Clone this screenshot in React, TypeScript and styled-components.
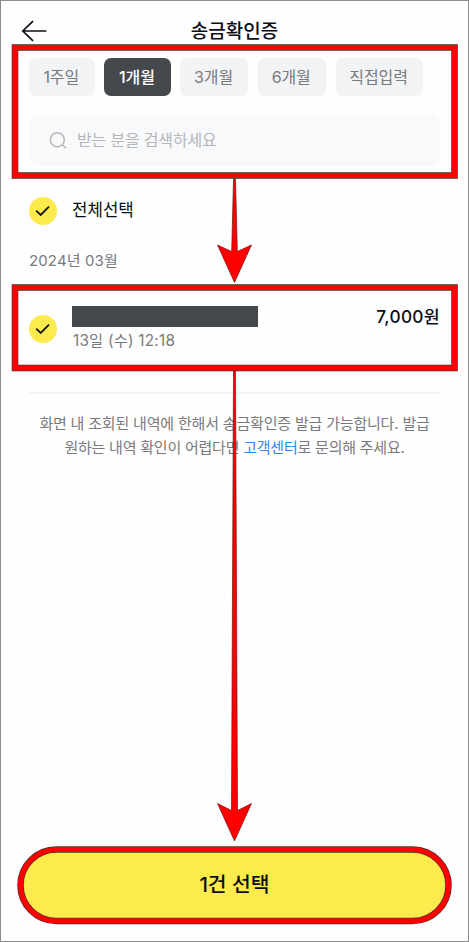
import React from "react";
import styled, { createGlobalStyle, css } from "styled-components";

const GlobalStyle = createGlobalStyle`
  *, *::before, *::after { box-sizing: border-box; }
  body {
    margin: 0;
    background: #fefefe;
    font-family: Inter, "Noto Sans CJK KR", sans-serif;
    color: #0c0e16;
  }
  button { font-family: inherit; border: 0; margin: 0; }
`;

const Screen = styled.main`
  position: relative;
  width: 469px;
  height: 942px;
  display: flex;
  flex-direction: column;
  border: 1px solid #8c8c8c;
  background: #fefefe;
  overflow: hidden;
`;

const Header = styled.header`
  display: grid;
  grid-template-columns: 48px 1fr 48px;
  align-items: center;
  height: 56.5px;
  padding-top: 3px;
`;

const BackButton = styled.button`
  display: flex;
  padding: 0 0 0 20px;
  background: none;
`;

const Title = styled.h1`
  margin: 0;
  padding-top: 2px;
  text-align: center;
  font-size: 19px;
  line-height: 24px;
  font-weight: 500;
  white-space: nowrap;
`;

const Filters = styled.section`
  padding: 0 28px;
`;

const ChipRow = styled.div`
  display: flex;
  gap: 9.4px;
`;

const Chip = styled.button<{ $active?: boolean; $width: number }>`
  width: ${(p) => p.$width}px;
  height: 38.5px;
  padding: 0 1.5px 2px 0;
  border-radius: 7px;
  background: #f2f3f5;
  color: #797a7d;
  font-size: 16px;
  letter-spacing: -0.1px;
  white-space: nowrap;
  ${(p) =>
    p.$active &&
    css`
      background: #45484d;
      color: #fff;
      font-weight: 500;
    `}
`;

const SearchField = styled.label`
  display: flex;
  align-items: center;
  gap: 10px;
  height: 51px;
  margin-top: 19px;
  padding-left: 20px;
  border-radius: 8px;
  background: #f8f9fb;
`;

const Placeholder = styled.span`
  padding-bottom: 2px;
  color: #b4b5b8;
  font-size: 16px;
  line-height: 24px;
  letter-spacing: -0.18px;
`;

const SelectAll = styled.div`
  display: flex;
  align-items: center;
  gap: 15px;
  height: 28px;
  margin: 30.5px 28px 0;
`;

const SelectAllText = styled.span`
  padding-bottom: 1px;
  font-size: 16.8px;
  line-height: 24px;
`;

const CheckMark = styled.span`
  display: flex;
  flex: none;
  align-items: center;
  justify-content: center;
  width: 28px;
  height: 28px;
  border-radius: 50%;
  background: #fdea4c;
`;

const Month = styled.h2`
  margin: 25.5px 28px 0;
  color: #797a7d;
  font-size: 15px;
  line-height: 22px;
  font-weight: 400;
  letter-spacing: 0.13px;
`;

const Transfer = styled.article`
  display: flex;
  align-items: flex-start;
  height: 86px;
  margin-top: 34px;
  padding: 0 28px;
`;

const TransferCheck = styled.div`
  margin-top: 8.5px;
`;

const Details = styled.div`
  flex: 1;
  margin-left: 15px;
`;

const HiddenName = styled.div`
  width: 186px;
  height: 21px;
  background: #45484d;
`;

const Time = styled.div`
  margin: 4px 0 0 1px;
  color: #797a7d;
  font-size: 15.3px;
  line-height: 20px;
  letter-spacing: 0.22px;
`;

const Amount = styled.strong`
  padding-top: 1px;
  font-size: 17.3px;
  line-height: 20px;
  font-weight: 500;
  letter-spacing: 0.3px;
`;

const Notice = styled.footer`
  margin: 0 28px;
  padding-top: 18px;
  border-top: 2px solid #f3f3f4;
  color: #797a7d;
  font-size: 15px;
  line-height: 24px;
  text-align: center;
  white-space: nowrap;
`;

const NoticeLine = styled.div<{ $tracking: number }>`
  letter-spacing: ${(p) => p.$tracking}px;
`;

const Link = styled.a`
  color: #3588f4;
`;

const SubmitButton = styled.button`
  height: 70px;
  margin: auto 22px 21px;
  padding: 0 0 4px;
  border-radius: 35px;
  background: #fdea4c;
  color: #0c0e16;
  font-size: 20.4px;
  font-weight: 500;
`;

/* Red guide marks drawn on top of the screen. */
const GuideLayer = styled.svg`
  position: absolute;
  inset: -1px;
  width: 469px;
  height: 942px;
  pointer-events: none;
`;

const Check = () => (
  <CheckMark>
    <svg width="28" height="28" viewBox="0 0 28 28" fill="none">
      <path d="M7.2 13.6 L11.7 18 L20 9.7" stroke="#101213" strokeWidth="1.8" />
    </svg>
  </CheckMark>
);

const periods = [
  { label: "1주일", width: 66 },
  { label: "1개월", width: 66.5, active: true },
  { label: "3개월", width: 68 },
  { label: "6개월", width: 68.5 },
  { label: "직접입력", width: 87.4 },
];

const frames = [
  { x: 15, y: 47.5, w: 439.5, h: 128, r: 0 },
  { x: 15, y: 287.5, w: 439.5, h: 80.5, r: 0 },
  { x: 20.5, y: 849.5, w: 428, h: 71.5, r: 35.75 },
];

export default function App() {
  return (
    <>
      <GlobalStyle />
      <Screen>
        <Header>
          <BackButton aria-label="뒤로">
            <svg width="27" height="22" viewBox="0 0 27 22" fill="none" stroke="#0c0e16" strokeWidth="1.7">
              <path d="M25.3 11H2M12 1.2L1.8 11L12 20.8" />
            </svg>
          </BackButton>
          <Title>송금확인증</Title>
        </Header>

        <Filters>
          <ChipRow>
            {periods.map((p) => (
              <Chip key={p.label} $width={p.width} $active={p.active}>
                {p.label}
              </Chip>
            ))}
          </ChipRow>
          <SearchField>
            <svg width="18" height="18" viewBox="0 0 18 18" fill="none" stroke="#b4b5b8" strokeWidth="1.4">
              <circle cx="8.3" cy="7.8" r="7" />
              <path d="M13.3 12.8L17 16.3" />
            </svg>
            <Placeholder>받는 분을 검색하세요</Placeholder>
          </SearchField>
        </Filters>

        <SelectAll>
          <Check />
          <SelectAllText>전체선택</SelectAllText>
        </SelectAll>

        <Month>2024년 03월</Month>

        <Transfer>
          <TransferCheck>
            <Check />
          </TransferCheck>
          <Details>
            <HiddenName />
            <Time>13일 (수) 12:18</Time>
          </Details>
          <Amount>7,000원</Amount>
        </Transfer>

        <Notice>
          <NoticeLine $tracking={-0.19}>화면 내 조회된 내역에 한해서 송금확인증 발급 가능합니다. 발급</NoticeLine>
          <NoticeLine $tracking={-0.23}>
            원하는 내역 확인이 어렵다면 <Link>고객센터</Link>로 문의해 주세요.
          </NoticeLine>
        </Notice>

        <SubmitButton>1건 선택</SubmitButton>

        <GuideLayer viewBox="0 0 469 942" fill="none">
          {frames.map((f) => (
            <g key={f.y}>
              <rect x={f.x} y={f.y} width={f.w} height={f.h} rx={f.r} stroke="#5a3030" strokeWidth="6.6" />
              <rect x={f.x} y={f.y} width={f.w} height={f.h} rx={f.r} stroke="#ff0000" strokeWidth="5" />
            </g>
          ))}
          <g fill="#ff0000" stroke="#6b1515" strokeWidth="0.7">
            <path d="M233.5 179H235.5L237.3 251.5L251.5 245L234.5 282.5L217.5 245L231.7 251.5Z" />
            <path d="M233.5 371H235.5L237.5 810.5L251.5 803.5L234.5 841L217.5 803.5L231.5 810.5Z" />
          </g>
        </GuideLayer>
      </Screen>
    </>
  );
}
